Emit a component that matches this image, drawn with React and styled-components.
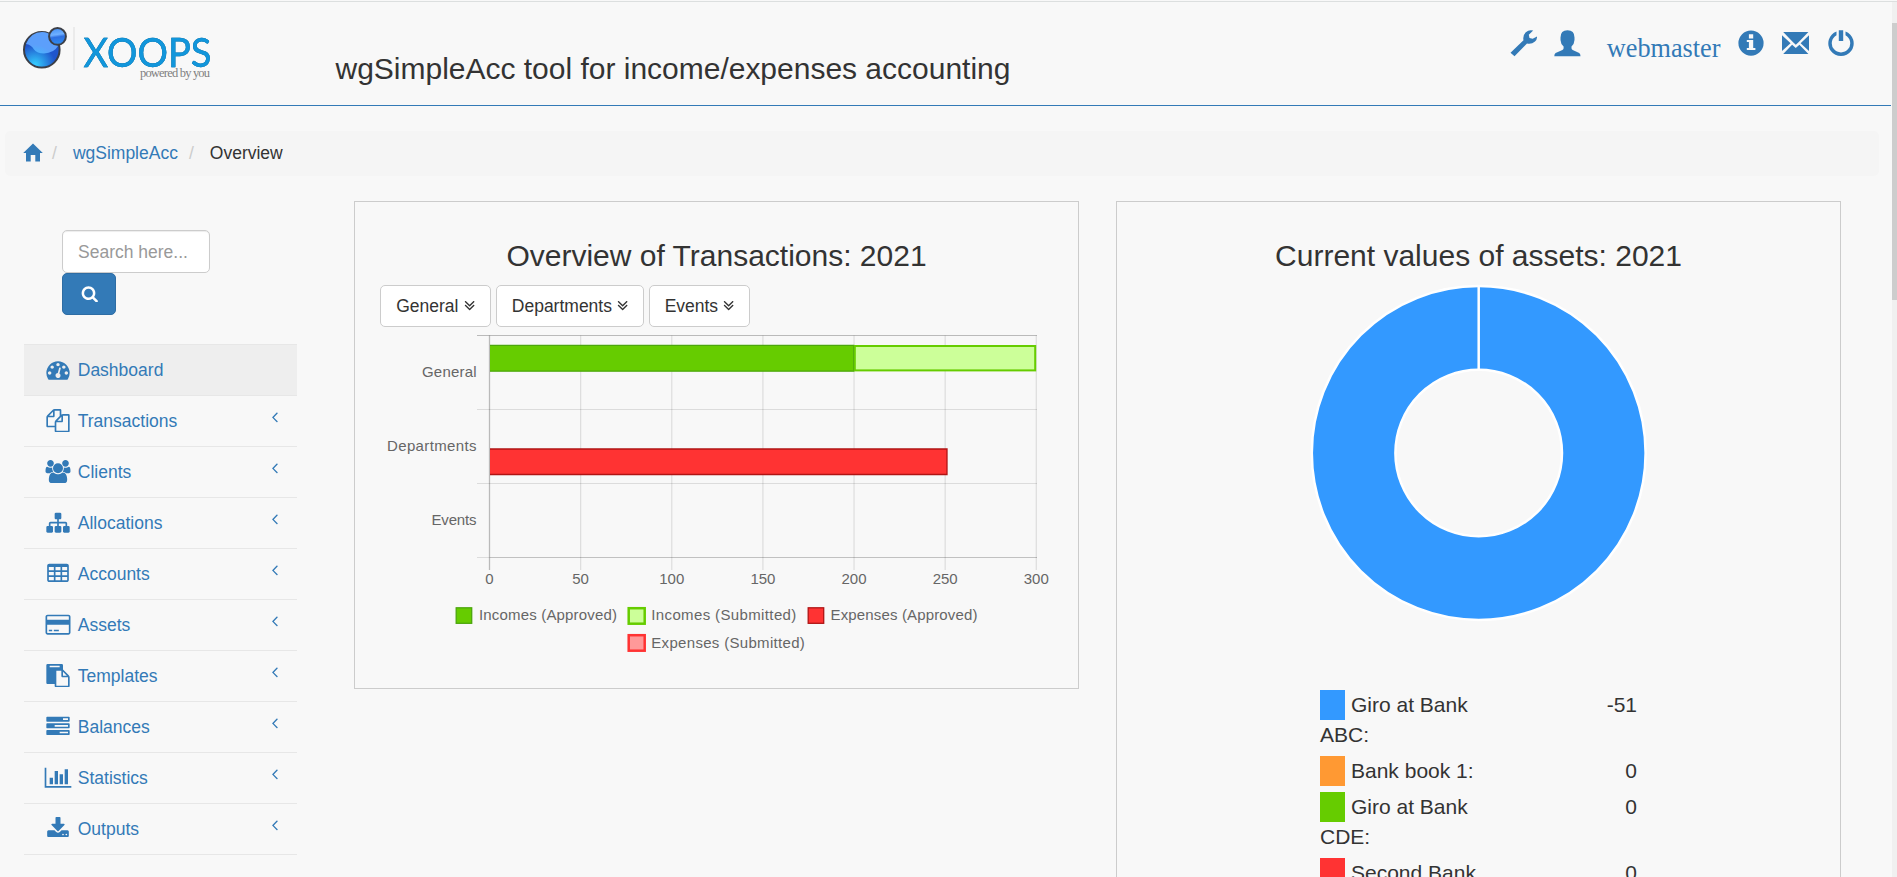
import React from 'react';
import styled, { createGlobalStyle } from 'styled-components';

const LINK = '#337ab7';

const GlobalStyle = createGlobalStyle`
  * { box-sizing: border-box; }
  body {
    margin: 0;
    background: #f8f8f8;
    color: #333;
    font: 17.5px/25px "Liberation Sans", Arial, sans-serif;
    overflow: hidden;
  }
`;

const Page = styled.div`
  display: flex;
  height: 877px;
  padding-top: 1px;
  overflow: hidden;
`;
const Main = styled.div`
  flex: 1;
  min-width: 0;
  border-top: 1px solid #dcdfdf;
`;
const ScrollTrack = styled.div`
  width: 5px;
  background: #f0f0f0;
  border-top: 1px solid #dcdfdf;
  padding-top: 21px;
`;
const ScrollThumb = styled.div`
  height: 277px;
  background: #cdcdcd;
`;

const Header = styled.header`
  display: flex;
  justify-content: space-between;
  height: 104px;
  width: 1891px;
  padding: 0 19.5px 0 22px;
  border-bottom: 1px solid ${LINK};
`;
const Brand = styled.div`
  display: flex;
  align-items: flex-start;
`;
const Logo = styled.svg`
  display: block;
  width: 200px;
  height: 60px;
  margin-top: 23px;
`;
const Wordmark = styled.text`
  font: 400 41px Lato, sans-serif;
  fill: #1296db;
  stroke: #1296db;
  stroke-width: 0.3px;
  filter: drop-shadow(0.8px 0.8px 0.5px #0a5680);
`;
const SiteTitle = styled.h3`
  margin: 50px 0 0 113.5px;
  font-size: 30px;
  line-height: 33px;
  font-weight: 400;
  letter-spacing: -0.01px;
`;
const UserTools = styled.nav`
  display: flex;
  align-items: flex-start;
  padding-top: 27px;
  color: ${LINK};
`;
const Tool = styled.svg`
  display: block;
  width: 27px;
  height: 27px;
  margin: 1px ${p => p.$after ?? 17}px 0 0;
  fill: currentColor;
`;
const UserName = styled.a`
  margin: 2px 17px 0 9px;
  font: 26.25px/36px "Liberation Serif", "Times New Roman", serif;
`;

const Breadcrumb = styled.ol`
  display: flex;
  align-items: center;
  list-style: none;
  height: 45px;
  width: 1874px;
  margin: 25px 0 25px 5px;
  padding: 0 19px 0 18px;
  background: #f5f5f5;
  border-radius: 5px;
`;
const Crumb = styled.li`
  display: flex;
  align-items: center;
  color: ${p => (p.$current ? '#333' : LINK)};
  &:not(:first-child)::before {
    content: '/';
    color: #ccc;
    padding: 0 16px 0 ${p => (p.$current ? 11 : 9)}px;
  }
`;
const HomeIcon = styled.svg`
  width: 20px;
  height: 19px;
  margin-top: -3px;
  fill: currentColor;
`;

const Columns = styled.div`
  display: flex;
  align-items: flex-start;
`;
const Sidebar = styled.aside`
  width: 273px;
  margin: 29px 57px 0 24px;
`;
const SearchForm = styled.form`
  display: flex;
  flex-direction: column;
  align-items: flex-start;
  padding-left: 38px;
  margin-bottom: 29px;
`;
const SearchInput = styled.input`
  width: 148px;
  height: 43px;
  padding: 9px 15px 7px;
  font: inherit;
  background: #fff;
  border: 1px solid #ccc;
  border-radius: 5px;
  box-shadow: inset 0 1px 1px rgba(0, 0, 0, 0.075);
  &::placeholder { color: #999; opacity: 1; }
`;
const SearchButton = styled.button`
  display: flex;
  align-items: center;
  justify-content: center;
  width: 54px;
  height: 42px;
  padding: 0 0 1px 1px;
  color: #fff;
  background: ${LINK};
  border: 1px solid #2e6da4;
  border-radius: 5px;
`;
const Menu = styled.ul`
  margin: 0;
  padding: 0;
  list-style: none;
  border-top: 1px solid #e7e7e7;
`;
const MenuItem = styled.li`
  display: flex;
  justify-content: space-between;
  height: 51px;
  padding: 13px 18.75px 0;
  border-bottom: 1px solid #e7e7e7;
  color: ${LINK};
  background: ${p => (p.$active ? '#eee' : 'transparent')};
`;
const MenuLabel = styled.a`
  display: flex;
  align-items: flex-start;
`;
const MenuIcon = styled.svg`
  width: 30px;
  height: 23.33px;
  margin: 0 5px 0 0;
  fill: currentColor;
`;
const Glyph = styled.svg`
  display: block;
  width: ${p => p.$w || 17.5}px;
  height: 17.5px;
  fill: currentColor;
`;
const Arrow = styled(Glyph)`
  margin: -1px -5.5px 0 0;
`;

const Card = styled.section`
  width: 725px;
  height: ${p => p.$height}px;
  margin-right: 37px;
  padding: 37px 25px 0;
  border: 1px solid #ccc;
`;
const CardTitle = styled.h3`
  margin: 0;
  font-size: 30px;
  line-height: 33px;
  font-weight: 400;
  text-align: center;
`;
const Filters = styled.div`
  display: flex;
  gap: 5px;
  margin-top: 13px;
`;
const FilterButton = styled.button`
  display: flex;
  align-items: center;
  justify-content: center;
  gap: 5px;
  width: ${p => p.$width}px;
  height: 42px;
  padding: 0;
  font: inherit;
  color: #333;
  background: #fff;
  border: 1px solid #ccc;
  border-radius: 5px;
`;
const BarChart = styled.svg`
  display: block;
  width: 673px;
  height: 340px;
  font: 15px "Liberation Sans", Arial, sans-serif;
  fill: #666;
`;
const Donut = styled.svg`
  display: block;
  width: 340px;
  height: 340px;
  margin: 11px auto 0;
`;

const AssetList = styled.div`
  width: 317px;
  margin: 67px 0 0 178px;
`;
const AssetRow = styled.div`
  display: flex;
  justify-content: space-between;
  padding: 0 0 6px;
  font-size: 21px;
  line-height: 30px;
`;
const AssetName = styled.div`
  width: 162px;
`;
const Swatch = styled.span`
  display: inline-block;
  width: 25px;
  height: 30px;
  margin-right: 6px;
  vertical-align: top;
  background: ${p => p.$color};
`;

const ICONS = {
  dashboard: [1792, 'M384 1152q0-53-37.5-90.5t-90.5-37.5-90.5 37.5-37.5 90.5 37.5 90.5 90.5 37.5 90.5-37.5 37.5-90.5zm192-448q0-53-37.5-90.5t-90.5-37.5-90.5 37.5-37.5 90.5 37.5 90.5 90.5 37.5 90.5-37.5 37.5-90.5zm428 481l101-382q6-26-7.5-48.5t-38.5-29.5-48 6.5-30 39.5l-101 382q-60 5-107 43.5t-63 98.5q-20 77 20 146t117 89 146-20 89-117q16-60-6-117t-72-91zm660-33q0-53-37.5-90.5t-90.5-37.5-90.5 37.5-37.5 90.5 37.5 90.5 90.5 37.5 90.5-37.5 37.5-90.5zm-640-640q0-53-37.5-90.5t-90.5-37.5-90.5 37.5-37.5 90.5 37.5 90.5 90.5 37.5 90.5-37.5 37.5-90.5zm448 192q0-53-37.5-90.5t-90.5-37.5-90.5 37.5-37.5 90.5 37.5 90.5 90.5 37.5 90.5-37.5 37.5-90.5zm320 448q0 261-141 483-19 29-54 29h-1402q-35 0-54-29-141-221-141-483 0-182 71-348t191-286 286-191 348-71 348 71 286 191 191 286 71 348z'],
  copy: [1792, 'M1696 384q40 0 68 28t28 68v1216q0 40-28 68t-68 28h-960q-40 0-68-28t-28-68v-288h-544q-40 0-68-28t-28-68v-672q0-40 20-88t48-76l408-408q28-28 76-48t88-20h416q40 0 68 28t28 68v328q68-40 128-40h416zm-544 213l-299 299h299v-299zm-640-384l-299 299h299v-299zm196 647l316-316v-416h-384v416q0 40-28 68t-68 28h-416v640h512v-256q0-40 20-88t48-76zm956 804v-1152h-384v416q0 40-28 68t-68 28h-416v640h896z'],
  users: [1920, 'M593 896q-162 5-265 128h-134q-82 0-138-40.5t-56-118.5q0-353 124-353 6 0 43.5 21t97.5 42.5 119 21.5q67 0 133-23-5 37-5 66 0 139 81 256zm1071 637q0 120-73 189.5t-194 69.5h-874q-121 0-194-69.5t-73-189.5q0-53 3.5-103.5t14-109 26.5-108.5 43-97.5 62-81 85.5-53.5 111.5-20q10 0 43 21.5t73 48 107 48 135 21.5 135-21.5 107-48 73-48 43-21.5q61 0 111.5 20t85.5 53.5 62 81 43 97.5 26.5 108.5 14 109 3.5 103.5zm-1024-1277q0 106-75 181t-181 75-181-75-75-181 75-181 181-75 181 75 75 181zm704 384q0 159-112.5 271.5t-271.5 112.5-271.5-112.5-112.5-271.5 112.5-271.5 271.5-112.5 271.5 112.5 112.5 271.5zm576 225q0 78-56 118.5t-138 40.5h-134q-103-123-265-128 81-117 81-256 0-29-5-66 66 23 133 23 59 0 119-21.5t97.5-42.5 43.5-21q124 0 124 353zm-128-609q0 106-75 181t-181 75-181-75-75-181 75-181 181-75 181 75 75 181z'],
  sitemap: [1792, 'M1792 1248v320q0 40-28 68t-68 28h-320q-40 0-68-28t-28-68v-320q0-40 28-68t68-28h96v-192h-512v192h96q40 0 68 28t28 68v320q0 40-28 68t-68 28h-320q-40 0-68-28t-28-68v-320q0-40 28-68t68-28h96v-192h-512v192h96q40 0 68 28t28 68v320q0 40-28 68t-68 28h-320q-40 0-68-28t-28-68v-320q0-40 28-68t68-28h96v-192q0-52 38-90t90-38h512v-192h-96q-40 0-68-28t-28-68v-320q0-40 28-68t68-28h320q40 0 68 28t28 68v320q0 40-28 68t-68 28h-96v192h512q52 0 90 38t38 90v192h96q40 0 68 28t28 68z'],
  table: [1664, 'M160 128h1344q66 0 113 47t47 113v1088q0 66-47 113t-113 47h-1344q-66 0-113-47t-47-113v-1088q0-66 47-113t113-47zM128 384v256h384v-256zM640 384v256h384v-256zM1152 384v256h384v-256zM128 768v256h384v-256zM640 768v256h384v-256zM1152 768v256h384v-256zM128 1152v256h384v-256zM640 1152v256h384v-256zM1152 1152v256h384v-256z'],
  card: [1920, 'M1760 128q66 0 113 47t47 113v1216q0 66-47 113t-113 47h-1600q-66 0-113-47t-47-113v-1216q0-66 47-113t113-47h1600zm-1600 128q-13 0-22.5 9.5t-9.5 22.5v224h1664v-224q0-13-9.5-22.5t-22.5-9.5h-1600zm1600 1280q13 0 22.5-9.5t9.5-22.5v-608h-1664v608q0 13 9.5 22.5t22.5 9.5h1600zm-1504-128v-128h256v128h-256zm384 0v-128h384v128h-384z'],
  paste: [1792, 'M768 1664h896v-640h-416q-40 0-68-28t-28-68v-416h-384v1152zm256-1440v-64q0-13-9.5-22.5t-22.5-9.5h-704q-13 0-22.5 9.5t-9.5 22.5v64q0 13 9.5 22.5t22.5 9.5h704q13 0 22.5-9.5t9.5-22.5zm256 672h299l-299-299v299zm512 128v672q0 40-28 68t-68 28h-960q-40 0-68-28t-28-68v-160h-544q-40 0-68-28t-28-68v-1344q0-40 28-68t68-28h1088q40 0 68 28t28 68v328q21 13 36 28l408 408q28 28 48 76t20 88z'],
  tasks: [1792, 'M1024 1408h640v-128h-640v128zm-384-512h1024v-128h-1024v128zm640-512h384v-128h-384v128zm512 832v256q0 26-19 45t-45 19h-1664q-26 0-45-19t-19-45v-256q0-26 19-45t45-19h1664q26 0 45 19t19 45zm0-512v256q0 26-19 45t-45 19h-1664q-26 0-45-19t-19-45v-256q0-26 19-45t45-19h1664q26 0 45 19t19 45zm0-512v256q0 26-19 45t-45 19h-1664q-26 0-45-19t-19-45v-256q0-26 19-45t45-19h1664q26 0 45 19t19 45z'],
  chart: [2048, 'M640 896v512h-256v-512h256zm384-512v1024h-256v-1024h256zm1024 1152v128h-2048v-1536h128v1408h1920zm-640-896v768h-256v-768h256zm384-384v1152h-256v-1152h256z'],
  download: [1792, 'M1344 1344q0-26-19-45t-45-19-45 19-19 45 19 45 45 19 45-19 19-45zm256 0q0-26-19-45t-45-19-45 19-19 45 19 45 45 19 45-19 19-45zm128-224v320q0 40-28 68t-68 28h-1472q-40 0-68-28t-28-68v-320q0-40 28-68t68-28h465l135 136q58 56 136 56t136-56l136-136h464q40 0 68 28t28 68zm-325-569q17 41-14 70l-448 448q-18 19-45 19t-45-19l-448-448q-31-29-14-70 17-39 59-39h256v-448q0-26 19-45t45-19h256q26 0 45 19t19 45v448h256q42 0 59 39z'],
};

const MENU = [
  ['Dashboard', 'dashboard'],
  ['Transactions', 'copy'],
  ['Clients', 'users'],
  ['Allocations', 'sitemap'],
  ['Accounts', 'table'],
  ['Assets', 'card'],
  ['Templates', 'paste'],
  ['Balances', 'tasks'],
  ['Statistics', 'chart'],
  ['Outputs', 'download'],
];

const ASSETS = [
  ['Giro at Bank ABC:', '-51', '#3399ff'],
  ['Bank book 1:', '0', '#ff9933'],
  ['Giro at Bank CDE:', '0', '#66cc00'],
  ['Second Bank', '0', '#ff3333'],
];

function XoopsLogo() {
  return (
    <Logo viewBox="22 25 200 60">
      <defs>
        <linearGradient id="orb" x1="0" y1="0" x2="0.15" y2="1">
          <stop offset="0" stopColor="#3f8cf5" />
          <stop offset="0.45" stopColor="#6fb0ff" />
          <stop offset="0.6" stopColor="#2f6fe0" />
          <stop offset="1" stopColor="#2d8bf0" />
        </linearGradient>
        <radialGradient id="glow" cx="0.3" cy="0.95" r="0.6">
          <stop offset="0" stopColor="#35d0ff" />
          <stop offset="1" stopColor="#35d0ff" stopOpacity="0" />
        </radialGradient>
      </defs>
      <circle cx="41.8" cy="49.8" r="17.8" fill="#1f55cc" stroke="#3c3f47" strokeWidth="2" />
      <path d="M26 44q5-12 16-12 12 0 16 14-4 7-14 7.500-7 0-10-4-3-5-8-5.500z" fill="#5c9ffb" />
      <circle cx="41.800" cy="49.800" r="16.800" fill="url(#glow)" />
      <circle cx="57.500" cy="36.400" r="8.400" fill="url(#orb)" stroke="#3c3f47" strokeWidth="2" />
      <rect x="73" y="27" width="2" height="43" fill="#ebebeb" />
      <Wordmark x="83.5" y="66.500" textLength="128" lengthAdjust="spacingAndGlyphs">XOOPS</Wordmark>
      <text x="140" y="76.500" fontFamily="Liberation Serif, serif" fontSize="12.500" fill="#808080" textLength="70">powered by you</text>
    </Logo>
  );
}

const TICKS = [0, 50, 100, 150, 200, 250, 300];
const ROWS = ['General', 'Departments', 'Events'];
const FILTERS = [['General', 111], ['Departments', 148], ['Events', 101]];
const ROW_LABEL_WIDTH = [54.5, 89.5, 45];
const LEGEND = [
  [456.2, 607.8, 479, 138, 'Incomes (Approved)', '#66cc00', '#4ca60c', 1.3],
  [628.7, 608.2, 651.3, 145, 'Incomes (Submitted)', '#ccff99', '#66cc00', 2.5],
  [808.2, 607.8, 830.500, 147, 'Expenses (Approved)', '#ff3333', '#b01414', 1.3],
  [628.7, 635.2, 651.3, 153.500, 'Expenses (Submitted)', '#ff9999', '#ff3333', 2.5],
];

function TransactionsChart() {
  const x = v => 489.5 + v * 1.8227;
  return (
    <BarChart viewBox="380 327 673 340">
      {TICKS.map(t => (
        <g key={t}>
          <line x1={x(t)} x2={x(t)} y1="335.500" y2="570" stroke="#000" strokeOpacity={t ? 0.1 : 0.25} strokeWidth="1.300" />
          <text x={x(t)} y="584.300" textAnchor="middle">{t}</text>
        </g>
      ))}
      {[335.5, 409.5, 483.5, 557.5].map((y, i) => (
        <line key={y} x1="477" x2="1037" y1={y} y2={y} stroke="#000" strokeOpacity={i === 0 ? 0.25 : 0.11} strokeWidth="1.200" />
      ))}
      <line x1="490" x2="1037" y1="557.500" y2="557.500" stroke="#000" strokeOpacity="0.12" strokeWidth="1" />
      {ROWS.map((r, i) => (
        <text key={r} x={476.5 - ROW_LABEL_WIDTH[i]} y={377 + i * 74.1} textLength={ROW_LABEL_WIDTH[i]}>{r}</text>
      ))}
      <path d="M490 345.300H853.700V371.200H490" fill="#66cc00" stroke="#4ca60c" strokeWidth="1.300" />
      <rect x="854.800" y="346" width="180.400" height="24.400" fill="#ccff99" stroke="#66cc00" strokeWidth="2" />
      <path d="M490 449H947V474.500H490" fill="#ff3333" stroke="#b01414" strokeWidth="1.300" />
      {LEGEND.map(([bx, by, tx, w, label, fill, stroke, sw]) => (
        <g key={label}>
          <rect x={bx} y={by} width={sw > 2 ? 16 : 15.5} height="15.5" fill={fill} stroke={stroke} strokeWidth={sw} />
          <text x={tx} y={by > 620 ? 648 : 620} textLength={w}>{label}</text>
        </g>
      ))}
    </BarChart>
  );
}

function ToolIcons() {
  return (
    <UserTools>
      <Tool viewBox="0 0 27 27">
        <path d="M.5 22.800 13.500 10.300Q12.500 5.500 15.800 2.200 19-.5 23.200.600L18.800 4.700 19.500 8 22.700 8.700 27 6.500Q27.200 9.500 25 11.500 21.500 14.500 17 13.500L4.500 26.200Z" />
      </Tool>
      <Tool viewBox="0 0 27 27" $after={17}>
        <path d="M13.500.200Q20.500.200 20.500 7.500V10Q20.300 14 17.500 16.500V18.300Q17.600 19.400 18.700 19.900L25.200 23Q26.500 23.800 26.500 26.200H.300Q.300 23.800 1.600 23L8.400 19.900Q9.500 19.400 9.600 18.300V16.500Q6.700 14 6.500 10V7.500Q6.500.200 13.500.200Z" />
      </Tool>
      <UserName>webmaster</UserName>
      <Tool viewBox="0 0 27 27">
        <path fillRule="evenodd" d="M13 .500a12.600 12.600 0 1 1 0 25.200a12.600 12.600 0 1 1 0-25.200zM10.900 4.200v4.200h4.300V4.200zM8.800 9.900v2h2.100v6h-2.100v2h8.600v-2h-2.200v-8z" />
      </Tool>
      <Tool viewBox="0 0 27 27" $after={19}>
        <path d="M1.200 2h25.200L16.500 12.300l-2.700 2.500-2.700-2.500zM0 5.200 8.600 13.200 0 20.900zM27 5.200v15.700L18.600 13.200zM1.200 24l8.900-9.300 3.700 3.300 3.600-3.300 9 9.300z" />
      </Tool>
      <Tool viewBox="0 0 27 27" $after={17}>
        <path d="M10.800.200h4.400v10.800h-4.400zM8.500 1.500v3.700a9.200 9.200 0 1 0 9 0V1.500a12.700 12.700 0 1 1-9 0z" />
      </Tool>
    </UserTools>
  );
}

function DoubleDown() {
  return (
    <Glyph $w={11.25} viewBox="320 0 1152 1792">
      <path d="M1395 864q0 13-10 23l-466 466q-10 10-23 10t-23-10l-466-466q-10-10-10-23t10-23l50-50q10-10 23-10t23 10l393 393 393-393q10-10 23-10t23 10l50 50q10 10 10 23zm0-384q0 13-10 23l-466 466q-10 10-23 10t-23-10l-466-466q-10-10-10-23t10-23l50-50q10-10 23-10t23 10l393 393 393-393q10-10 23-10t23 10l50 50q10 10 10 23z" />
    </Glyph>
  );
}

export default function App() {
  return (
    <Page>
      <GlobalStyle />
      <Main>
        <Header>
          <Brand>
            <XoopsLogo />
            <SiteTitle>wgSimpleAcc tool for income/expenses accounting</SiteTitle>
          </Brand>
          <ToolIcons />
        </Header>
        <Breadcrumb>
          <Crumb>
            <HomeIcon viewBox="0 0 20 19">
              <path d="M10 .500 19.800 10H17v8.500h-4.700V12H7.700v6.500H3V10H.200z" />
            </HomeIcon>
          </Crumb>
          <Crumb>wgSimpleAcc</Crumb>
          <Crumb $current>Overview</Crumb>
        </Breadcrumb>
        <Columns>
          <Sidebar>
            <SearchForm>
              <SearchInput placeholder="Search here..." />
              <SearchButton type="button" aria-label="Search">
                <Glyph viewBox="0 0 1792 1792">
                  <path d="M1216 832q0-185-131.5-316.5t-316.5-131.5-316.5 131.5-131.5 316.5 131.5 316.5 316.5 131.5 316.5-131.5 131.5-316.5zm512 832q0 52-38 90t-90 38q-54 0-90-38l-343-342q-179 124-399 124-143 0-273.5-55.5t-225-150-150-225-55.5-273.5 55.5-273.5 150-225 225-150 273.5-55.5 273.5 55.5 225 150 150 225 55.5 273.5q0 220-124 399l343 343q37 37 37 90z" />
                </Glyph>
              </SearchButton>
            </SearchForm>
            <Menu>
              {MENU.map(([label, icon], i) => (
                <MenuItem key={label} $active={i === 0}>
                  <MenuLabel>
                    <MenuIcon viewBox={`${(ICONS[icon][0] - 2304) / 2} 0 2304 1792`}>
                      <path fillRule="evenodd" d={ICONS[icon][1]} />
                    </MenuIcon>
                    {label}
                  </MenuLabel>
                  {i > 0 && (
                    <Arrow viewBox="0 0 1792 1792">
                      <path d="M1203 544q0 13-10 23l-393 393 393 393q10 10 10 23t-10 23l-50 50q-10 10-23 10t-23-10l-466-466q-10-10-10-23t10-23l466-466q10-10 23-10t23 10l50 50q10 10 10 23z" />
                    </Arrow>
                  )}
                </MenuItem>
              ))}
            </Menu>
          </Sidebar>
          <Card $height={488}>
            <CardTitle>Overview of Transactions: 2021</CardTitle>
            <Filters>
              {FILTERS.map(([label, width]) => (
                <FilterButton key={label} $width={width}>{label}<DoubleDown /></FilterButton>
              ))}
            </Filters>
            <TransactionsChart />
          </Card>
          <Card $height={760}>
            <CardTitle>Current values of assets: 2021</CardTitle>
            <Donut viewBox="1309 283 340 340">
              <circle cx="1478.7" cy="453" r="125" fill="none" stroke="#3399ff" strokeWidth="83.300" />
              <circle cx="1478.7" cy="453" r="166.900" fill="none" stroke="#fff" strokeWidth="2.500" />
              <circle cx="1478.7" cy="453" r="83.300" fill="none" stroke="#fff" strokeWidth="2.500" />
              <line x1="1478.7" x2="1478.7" y1="286" y2="370" stroke="#fff" strokeWidth="2.500" />
            </Donut>
            <AssetList>
              {ASSETS.map(([name, value, color]) => (
                <AssetRow key={name}>
                  <AssetName><Swatch $color={color} />{name}</AssetName>
                  <span>{value}</span>
                </AssetRow>
              ))}
            </AssetList>
          </Card>
        </Columns>
      </Main>
      <ScrollTrack><ScrollThumb /></ScrollTrack>
    </Page>
  );
}
